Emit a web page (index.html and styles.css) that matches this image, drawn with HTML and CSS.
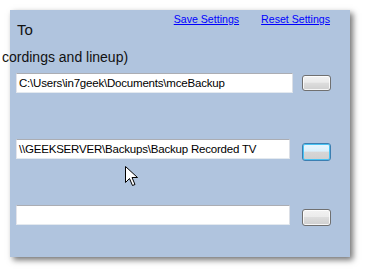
FILE: index.html
```html
<!DOCTYPE html>
<html>
<head>
<meta charset="utf-8">
<link rel="stylesheet" href="styles.css">
</head>
<body>
<div class="panel">
  <div class="top">
    <div class="title">To</div>
    <div class="links">
      <a href="#" class="link">Save Settings</a>
      <a href="#" class="link">Reset Settings</a>
    </div>
  </div>
  <div class="subtitle"><span>cordings and lineup)</span></div>
  <div class="rows">
    <div class="row">
      <div class="textbox tb-wide">C:\Users\in7geek\Documents\mceBackup</div>
      <div class="btn"></div>
    </div>
    <div class="row">
      <div class="textbox">\\GEEKSERVER\Backups\Backup Recorded TV</div>
      <div class="btn btn-focus"></div>
      <svg class="cursor" width="13" height="21" viewBox="0 0 13 21">
        <path d="M0.5 0.5 L0.5 16.5 L4.5 12.5 L7.5 19.5 L10 18.5 L7 11.5 L12.5 11.5 Z" fill="#fff" stroke="#000" stroke-width="1" stroke-linejoin="miter"/>
      </svg>
    </div>
    <div class="row">
      <div class="textbox"></div>
      <div class="btn"></div>
    </div>
  </div>
</div>
</body>
</html>
```
FILE: styles.css
```css
html, body {
  margin: 0;
  padding: 0;
  background: #ffffff;
  overflow: hidden;
  width: 368px;
  height: 275px;
}

.panel {
  margin: 10px 0 0 10px;
  width: 340px;
  height: 247px;
  background: #b0c4de;
  box-shadow: 3px 3px 6px rgba(0, 0, 0, 0.55);
  padding-left: 6px;
  box-sizing: border-box;
  font-family: "Liberation Sans", Arial, sans-serif;
  display: flex;
  flex-direction: column;
}

.top {
  display: flex;
  justify-content: space-between;
  align-items: flex-start;
  width: 314px;
}

.title {
  font-size: 15px;
  line-height: 17px;
  color: #111;
  margin-top: 11px;
  padding-left: 1px;
}

.links {
  display: flex;
  gap: 22px;
  margin-top: 3px;
}

.link {
  font-size: 10.6px;
  line-height: 13px;
  color: #0000ff;
  text-decoration: underline;
}

.subtitle {
  margin-left: -14px;
  white-space: nowrap;
  font-size: 14px;
  line-height: 17px;
  color: #111;
  margin-top: 11px;
}

.rows {
  display: flex;
  flex-direction: column;
  margin-top: 7px;
}

.row {
  height: 66px;
  display: flex;
  align-items: flex-start;
  gap: 12px;
  position: relative;
}

.textbox {
  width: 274px;
  height: 20px;
  box-sizing: border-box;
  background: #fff;
  border: 1px solid #abadb3;
  border-bottom-color: #e3e9ef;
  border-right-color: #dbdfe6;
  border-left-color: #e2e3ea;
  font-size: 11.5px;
  letter-spacing: -0.2px;
  line-height: 18px;
  padding-left: 2px;
  color: #000;
  white-space: nowrap;
  overflow: hidden;
}

.tb-wide {
  width: 277px;
}

.row:first-child {
  gap: 9px;
}

.btn {
  width: 29px;
  height: 16px;
  margin-top: 2px;
  box-sizing: border-box;
  border: 1px solid #707070;
  border-radius: 3px;
  background: linear-gradient(#f2f2f2 0%, #ebebeb 45%, #dddddd 50%, #cfcfcf 100%);
  box-shadow: inset 0 0 0 1px rgba(255, 255, 255, 0.8);
}

.btn-focus {
  margin-top: 4px;
  height: 18px;
  border-color: #3c7fb1;
  background: linear-gradient(#eaf6fd 0%, #d9f0fc 45%, #d6d6d6 50%, #cfcfcf 100%);
  box-shadow: inset 0 0 0 1px #48c3f4;
}

.row:last-child .btn {
  margin-top: 4px;
  height: 17px;
}

.cursor {
  position: absolute;
  left: 109px;
  top: 27px;
}
```
